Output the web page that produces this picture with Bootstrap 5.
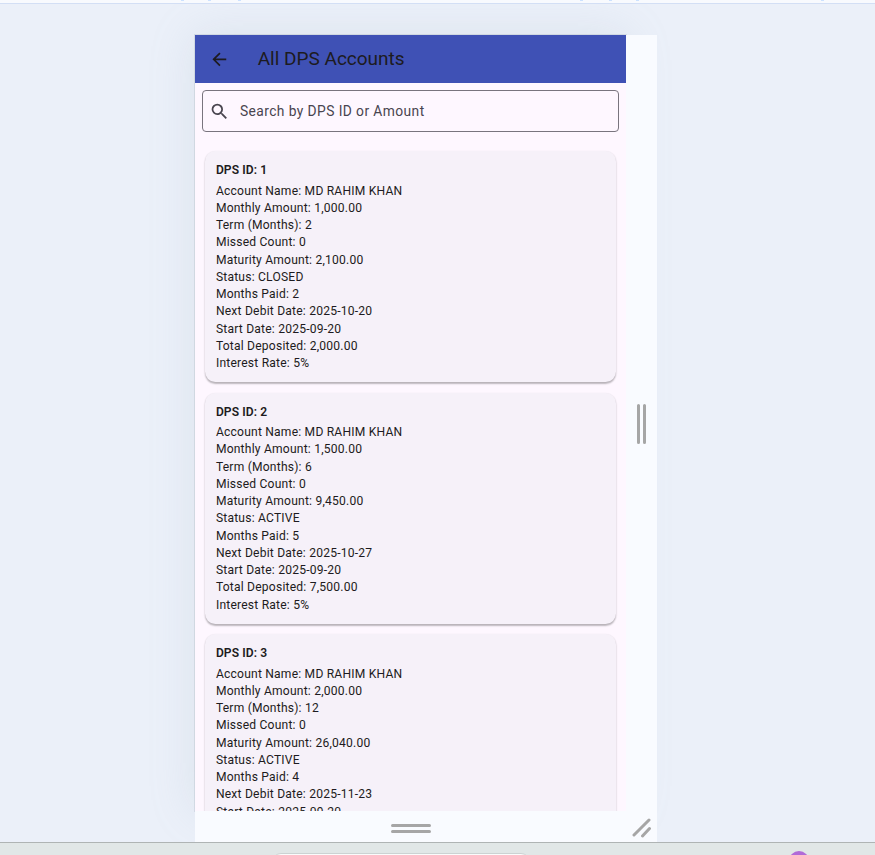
<!DOCTYPE html>
<html lang="en">
<head>
<meta charset="utf-8">
<meta name="viewport" content="width=device-width, initial-scale=1">
<title>All DPS Accounts</title>
<link href="https://cdn.jsdelivr.net/npm/bootstrap@5.3.0/dist/css/bootstrap.min.css" rel="stylesheet">
<style>
body{background:#ebf0f9;font-family:Roboto,"Noto Sans",sans-serif;color:#1d1b20;height:855px}
.toolstrip{height:4px;background:#f8fafe;border-bottom:1px solid #d3dff5}
.tick{width:3px;height:1px;background:#cce2ff;top:0}
.stage{height:838px;padding:31px 218px 0 195px}
.device{width:462px;height:807px;background:#f9fbff}
.screen{width:431px;height:776px;background:#fef7ff;box-shadow:0 0 0 1px rgba(90,110,130,.14),0 0 42px rgba(160,178,190,.22)}
.gutter{width:31px;height:776px;background:#f9fbff;z-index:1}
.footer-grip{height:31px;background:#f9fbff;z-index:1}
.appbar{height:48px;background:#3f51b5;padding-left:14px}
.appbar h1{font-size:19px;font-weight:400;margin-left:28px;line-height:24px}
.search-box{height:42px;margin:7px 7px 0;border:1px solid #79747e;border-radius:4px;padding-left:5.5px;color:#49454f;font-size:13.82px;letter-spacing:.41px}
.search-label{margin-left:10.5px}
.accounts{padding:19px 10px 0}
.account{background:#f6f1f9;border:0;border-radius:10.4px;padding:11px 10.9px 0;height:231px;margin-bottom:10.5px;box-shadow:0 1.2px 1.7px rgba(0,0,0,.24),0 1px 2.2px rgba(0,0,0,.07);flex:none;color:#1d1b20}
.account h2{font-size:12.09px;font-weight:600;line-height:17.27px;margin:0 0 3.45px;letter-spacing:.085px}
.account li{font-size:12.09px;line-height:17.25px;letter-spacing:.21px}
.bottombar{height:13px;background:#e1e7e7;border-top:1px solid #afb4b4}
.tab-top{left:272px;top:10px;width:258px;height:20px;background:#fafbfb;border:1px solid #ccd2d2;border-radius:9px}
.avatar-dot{left:789px;top:8px;width:20px;height:20px;background:#b16bd8;border-radius:50%}
</style>
<script src="https://cdn.jsdelivr.net/npm/bootstrap@5.3.0/dist/js/bootstrap.bundle.min.js"></script>
</head>
<body class="overflow-hidden">
<div class="toolstrip position-relative" id="ticks"></div>
<main class="stage">
  <div class="device">
    <div class="d-flex">
      <section class="screen d-flex flex-column flex-shrink-0 overflow-hidden">
        <header class="appbar d-flex align-items-center flex-shrink-0">
          <svg width="20.700" height="20.700" viewBox="0 0 24 24" fill="#1d1b20" class="flex-shrink-0"><path d="M20 11H7.83l5.59-5.59L12 4l-8 8 8 8 1.41-1.41L7.83 13H20v-2z"/></svg>
          <h1 class="mb-0">All DPS Accounts</h1>
        </header>
        <div class="search-box d-flex align-items-center flex-shrink-0">
          <svg width="21" height="21" viewBox="0 0 24 24" fill="#49454f"><path d="M15.5 14h-.79l-.28-.27A6.471 6.471 0 0 0 16 9.5 6.5 6.5 0 1 0 9.5 16c1.61 0 3.09-.59 4.23-1.57l.27.28v.79l5 4.99L20.49 19l-4.99-5zm-6 0C7.01 14 5 11.99 5 9.5S7.01 5 9.5 5 14 7.01 14 9.5 11.99 14 9.5 14z"/></svg>
          <span class="search-label">Search by DPS ID or Amount</span>
        </div>
        <div class="accounts d-flex flex-column" id="accounts"></div>
      </section>
      <div class="gutter position-relative">
        <svg width="31" height="776" class="d-block" stroke="#a6a6a6" stroke-width="3" stroke-linecap="round"><path d="M12.5 370.5v37M18.5 370.5v37"/></svg>
      </div>
    </div>
    <div class="footer-grip position-relative">
      <svg width="462" height="31" class="d-block" stroke="#a6a6a6" stroke-width="3" stroke-linecap="round"><path d="M197.5 14.5h37M197.5 20.500h37M439 24l15-15M447.500 25l7-7.500"/></svg>
    </div>
  </div>
</main>
<footer class="bottombar position-relative overflow-hidden">
  <div class="tab-top position-absolute"></div>
  <div class="avatar-dot position-absolute"></div>
</footer>
<script>
const labels=["Account Name","Monthly Amount","Term (Months)","Missed Count","Maturity Amount","Status","Months Paid","Next Debit Date","Start Date","Total Deposited","Interest Rate"];
const data=[
 ["MD RAHIM KHAN","1,000.00","2","0","2,100.00","CLOSED","2","2025-10-20","2025-09-20","2,000.00","5%"],
 ["MD RAHIM KHAN","1,500.00","6","0","9,450.00","ACTIVE","5","2025-10-27","2025-09-20","7,500.00","5%"],
 ["MD RAHIM KHAN","2,000.00","12","0","26,040.00","ACTIVE","4","2025-11-23","2025-09-20"]
];
document.getElementById("accounts").innerHTML=data.map((d,i)=>
 `<article class="card account"><h2>DPS ID: ${i+1}</h2><ul class="list-unstyled mb-0">${d.map((v,j)=>`<li>${labels[j]}: ${v}</li>`).join("")}</ul></article>`).join("");
document.getElementById("ticks").innerHTML=[181,208,238,580,609,636,821].map(x=>`<span class="tick position-absolute" style="left:${x}px"></span>`).join("");
</script>
</body>
</html>
